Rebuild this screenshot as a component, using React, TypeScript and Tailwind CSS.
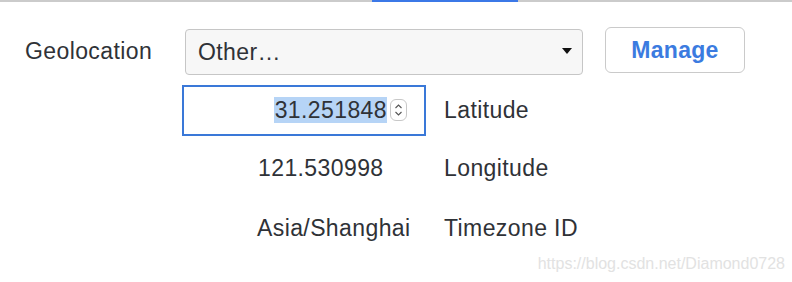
import React from "react";

export default function App() {
  const font = { fontFamily: '"Liberation Sans", Arial, sans-serif' };
  return (
    <div
      className="relative w-[792px] h-[282px] bg-white text-[#2f3237] overflow-hidden"
      style={font}
    >
      {/* top tab bar line */}
      <div className="flex h-[2px] bg-[#cbcbcb]">
        <div className="ml-[372px] w-[146px] h-[2px] bg-[#3b78e7]" />
      </div>

      {/* Geolocation row */}
      <div className="flex items-start pt-[25px]">
        <div className="w-[185px] pl-[25px] pt-[10px] text-[23px] tracking-[0.4px] leading-[28px]">
          Geolocation
        </div>
        <div className="mt-[2px] w-[398px] h-[46px] rounded-[4px] border border-[#c6c6c6] bg-[#f7f7f7] flex items-center pl-[12px] pr-[10px]">
          <span className="flex-1 text-[23px] tracking-[0.4px] leading-[28px]">Other…</span>
          <svg width="10" height="6" viewBox="0 0 10 6" className="mt-[-2px]">
            <path d="M0 0 L10 0 L5 6 Z" fill="#111" />
          </svg>
        </div>
        <button className="ml-[22px] w-[140px] h-[46px] rounded-[6px] border border-[#cacaca] bg-white text-[#3b7be0] font-bold text-[23px] tracking-[0.3px] leading-[28px]">
          Manage
        </button>
      </div>

      {/* coordinates */}
      <div className="grid grid-cols-[244px_1fr] gap-x-[18px] pl-[182px] mt-[6px] text-[23px] tracking-[0.4px] leading-[28px]">
        <div className="h-[58px] flex items-center">
          <div className="w-[244px] h-[51px] border-2 border-[#3a78d8] flex items-center justify-end pr-[17px]">
            <span className="bg-[#b6d4f6] leading-[26px] pl-[1px]">31.251848</span>
            <span className="ml-[3px] w-[17px] h-[22px] shrink-0 rounded-[6px] border border-[#c8c8c8] bg-white flex items-center justify-center">
              <svg width="9" height="16" viewBox="0 0 9 16">
                <path d="M1.5 6 L4.5 3 L7.5 6" fill="none" stroke="#555" strokeWidth="1.1" />
                <path d="M1.5 10 L4.5 13 L7.5 10" fill="none" stroke="#555" strokeWidth="1.1" />
              </svg>
            </span>
          </div>
        </div>
        <div className="h-[58px] flex items-center">Latitude</div>

        <div className="h-[58px] flex items-center pl-[76px]">121.530998</div>
        <div className="h-[58px] flex items-center">Longitude</div>

        <div className="h-[58px] flex items-center pl-[75px] pt-[3px]">Asia/Shanghai</div>
        <div className="h-[58px] flex items-center pt-[3px]">Timezone ID</div>
      </div>

      {/* watermark */}
      <div className="absolute right-[7px] top-[254px] text-[16px] leading-[20px] text-[#e2e2e2]">
        https://blog.csdn.net/Diamond0728
      </div>
    </div>
  );
}
